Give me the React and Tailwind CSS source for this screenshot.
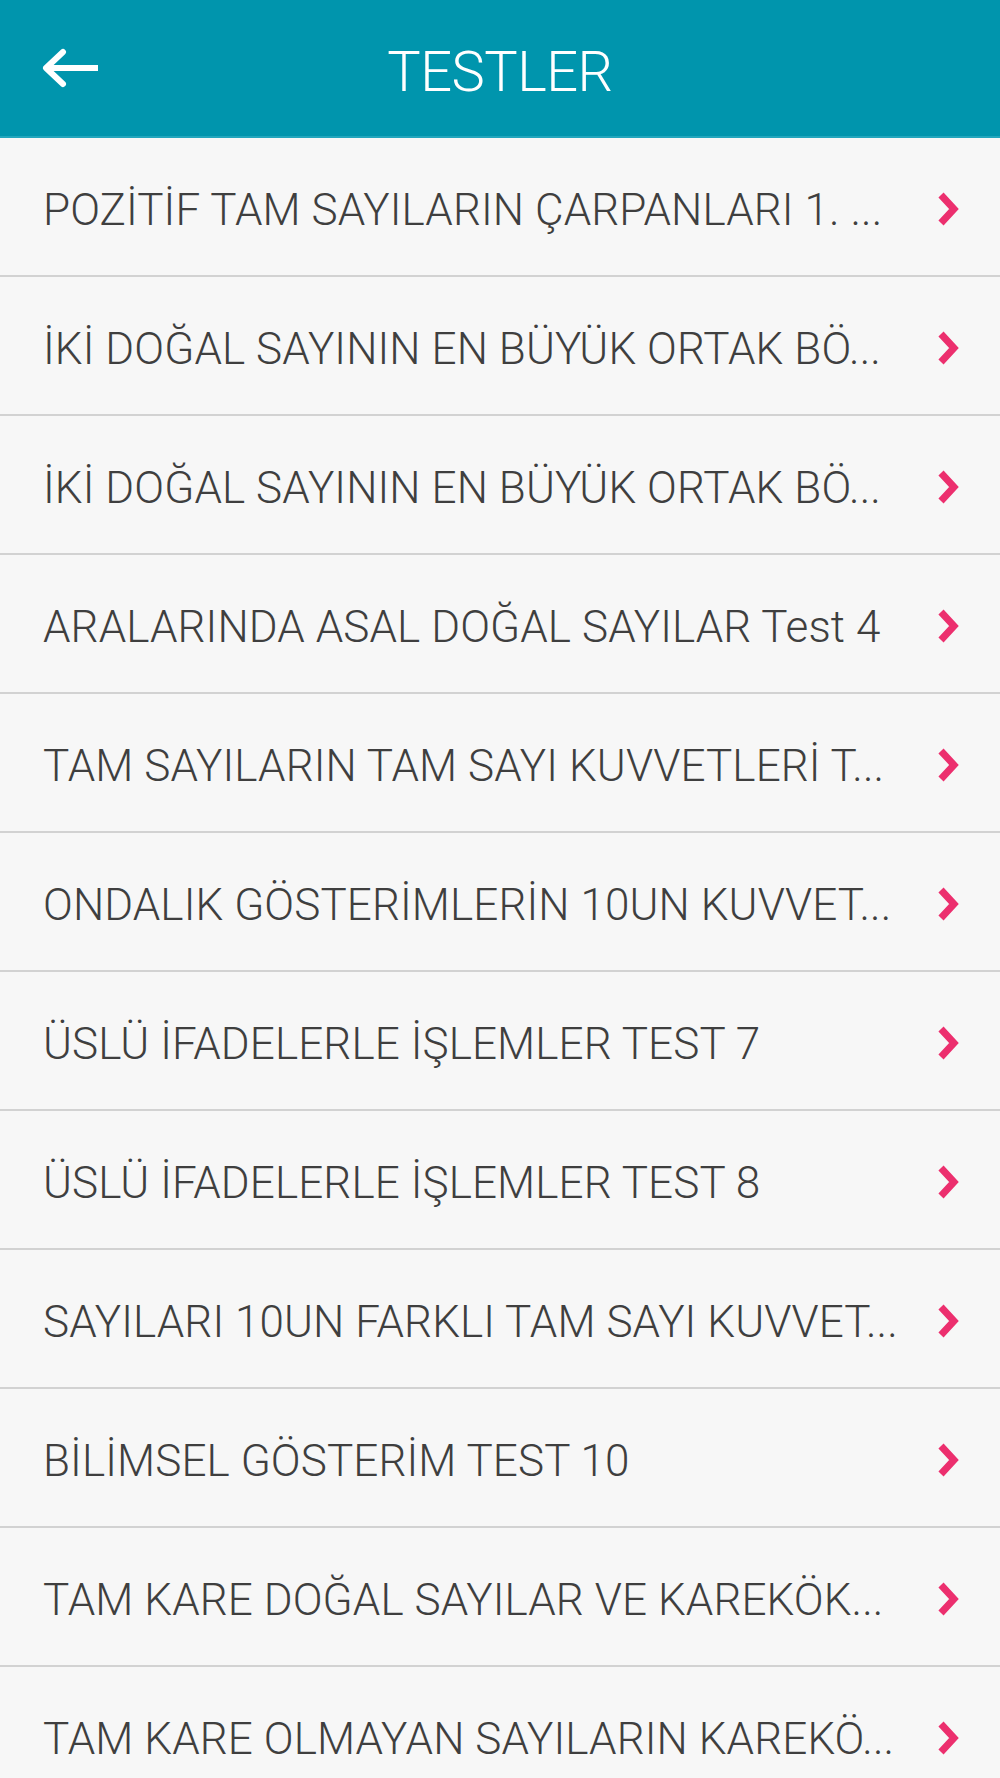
import React from "react";

const items = [
  "POZİTİF TAM SAYILARIN ÇARPANLARI 1. ...",
  "İKİ DOĞAL SAYININ EN BÜYÜK ORTAK BÖ...",
  "İKİ DOĞAL SAYININ EN BÜYÜK ORTAK BÖ...",
  "ARALARINDA ASAL DOĞAL SAYILAR Test 4",
  "TAM SAYILARIN TAM SAYI KUVVETLERİ T...",
  "ONDALIK GÖSTERİMLERİN 10UN KUVVET...",
  "ÜSLÜ İFADELERLE İŞLEMLER TEST 7",
  "ÜSLÜ İFADELERLE İŞLEMLER TEST 8",
  "SAYILARI 10UN FARKLI TAM SAYI KUVVET...",
  "BİLİMSEL GÖSTERİM TEST 10",
  "TAM KARE DOĞAL SAYILAR VE KAREKÖK...",
  "TAM KARE OLMAYAN SAYILARIN KAREKÖ...",
];

function Chevron() {
  return (
    <svg width="22" height="36" viewBox="0 0 22 36" className="shrink-0">
      <polyline
        points="4,4 17,18 4,32"
        fill="none"
        stroke="#ec2f6e"
        strokeWidth="7"
        strokeLinejoin="miter"
        strokeLinecap="butt"
      />
    </svg>
  );
}

export default function App() {
  return (
    <div
      className="w-[1000px] h-[1778px] overflow-hidden bg-[#f7f7f7]"
      style={{ fontFamily: "Roboto, 'Noto Sans', sans-serif" }}
    >
      <header className="h-[138px] bg-[#0095ad] border-b-2 border-[#22a6bd] grid grid-cols-[1fr_auto_1fr] items-center">
        <div className="pl-[41px] flex items-center">
          <svg width="60" height="40" viewBox="0 0 60 40">
            <line x1="6" y1="20" x2="57" y2="20" stroke="#ffffff" strokeWidth="6" />
            <polyline
              points="22,4 5,20 22,36"
              fill="none"
              stroke="#ffffff"
              strokeWidth="6"
              strokeLinecap="round"
              strokeLinejoin="round"
            />
          </svg>
        </div>
        <h1 className="text-white text-[56px] font-light leading-normal tracking-[-0.5px] pt-[8px]">
          TESTLER
        </h1>
        <div />
      </header>
      <ul>
        {items.map((t, i) => (
          <li
            key={i}
            className="h-[139px] border-b-2 border-[#d2d2d2] flex items-center justify-between pl-[43px] pr-[41px] pt-[4px]"
          >
            <span className="text-[44px] font-light text-[#3f3f3f] whitespace-nowrap leading-normal pt-[2px] tracking-[0.1px]">
              {t}
            </span>
            <Chevron />
          </li>
        ))}
      </ul>
    </div>
  );
}
